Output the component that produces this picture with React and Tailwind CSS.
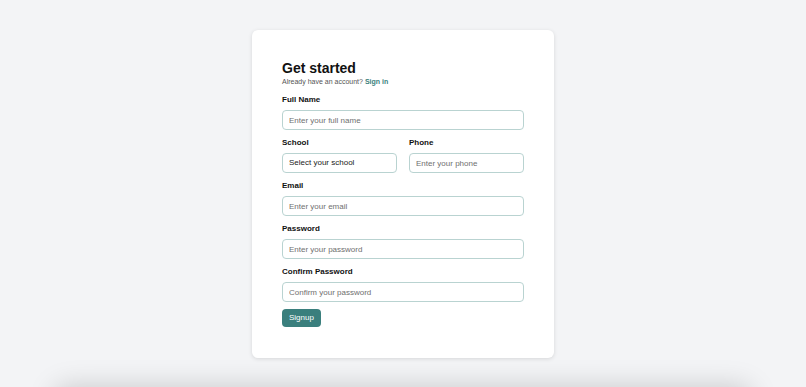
import React from 'react';

const inputCls =
  'block w-full h-[20px] rounded-[4px] border border-[#b9d3d1] bg-white px-[6px] text-[8px] text-[#222] placeholder:text-[#6f6f6f] outline-none';

const Field = ({ label, placeholder, type = 'text' }) => (
  <div className="mb-[8px]">
    <label className="block text-[8px] leading-[10px] font-bold text-[#111] mb-[5px]">{label}</label>
    <input type={type} placeholder={placeholder} className={inputCls} />
  </div>
);

export default function App() {
  return (
    <div className="min-h-[420px] bg-[#f3f4f6] overflow-hidden" style={{ fontFamily: '"Liberation Sans", Arial, sans-serif' }}>
      <div className="h-[387px] flex justify-center pt-[30px]">
        <div className="w-[302px] h-[328px] bg-white rounded-[6px] shadow-[0_1px_4px_rgba(0,0,0,0.12)] px-[30px] pt-[30px]">
          <h1 className="text-[14px] leading-[16px] font-bold text-[#111]">Get started</h1>
          <p className="text-[7px] leading-[9px] text-[#555] mt-[1px]">
            Already have an account? <a className="font-bold text-[#3a7f7d]">Sign in</a>
          </p>
          <form className="mt-[9px]">
            <Field label="Full Name" placeholder="Enter your full name" />
            <div className="flex gap-[12px]">
              <div className="flex-1 mb-[8px]">
                <label className="block text-[8px] leading-[10px] font-bold text-[#111] mb-[5px]">School</label>
                <select className={inputCls + ' appearance-none'} defaultValue="">
                  <option value="">Select your school</option>
                </select>
              </div>
              <div className="flex-1 mb-[8px]">
                <label className="block text-[8px] leading-[10px] font-bold text-[#111] mb-[5px]">Phone</label>
                <input placeholder="Enter your phone" className={inputCls} />
              </div>
            </div>
            <Field label="Email" placeholder="Enter your email" type="email" />
            <Field label="Password" placeholder="Enter your password" type="password" />
            <Field label="Confirm Password" placeholder="Confirm your password" type="password" />
            <button type="button" className="block mt-[-1px] h-[18px] px-[7px] rounded-[4px] bg-[#3a7f7d] text-white text-[8px] leading-[18px]">
              Signup
            </button>
          </form>
        </div>
      </div>
      <div className="mx-[55px] h-[40px] bg-[#f3f4f6] rounded-[10px] shadow-[0_0_28px_rgba(0,0,0,0.18)]" />
    </div>
  );
}
